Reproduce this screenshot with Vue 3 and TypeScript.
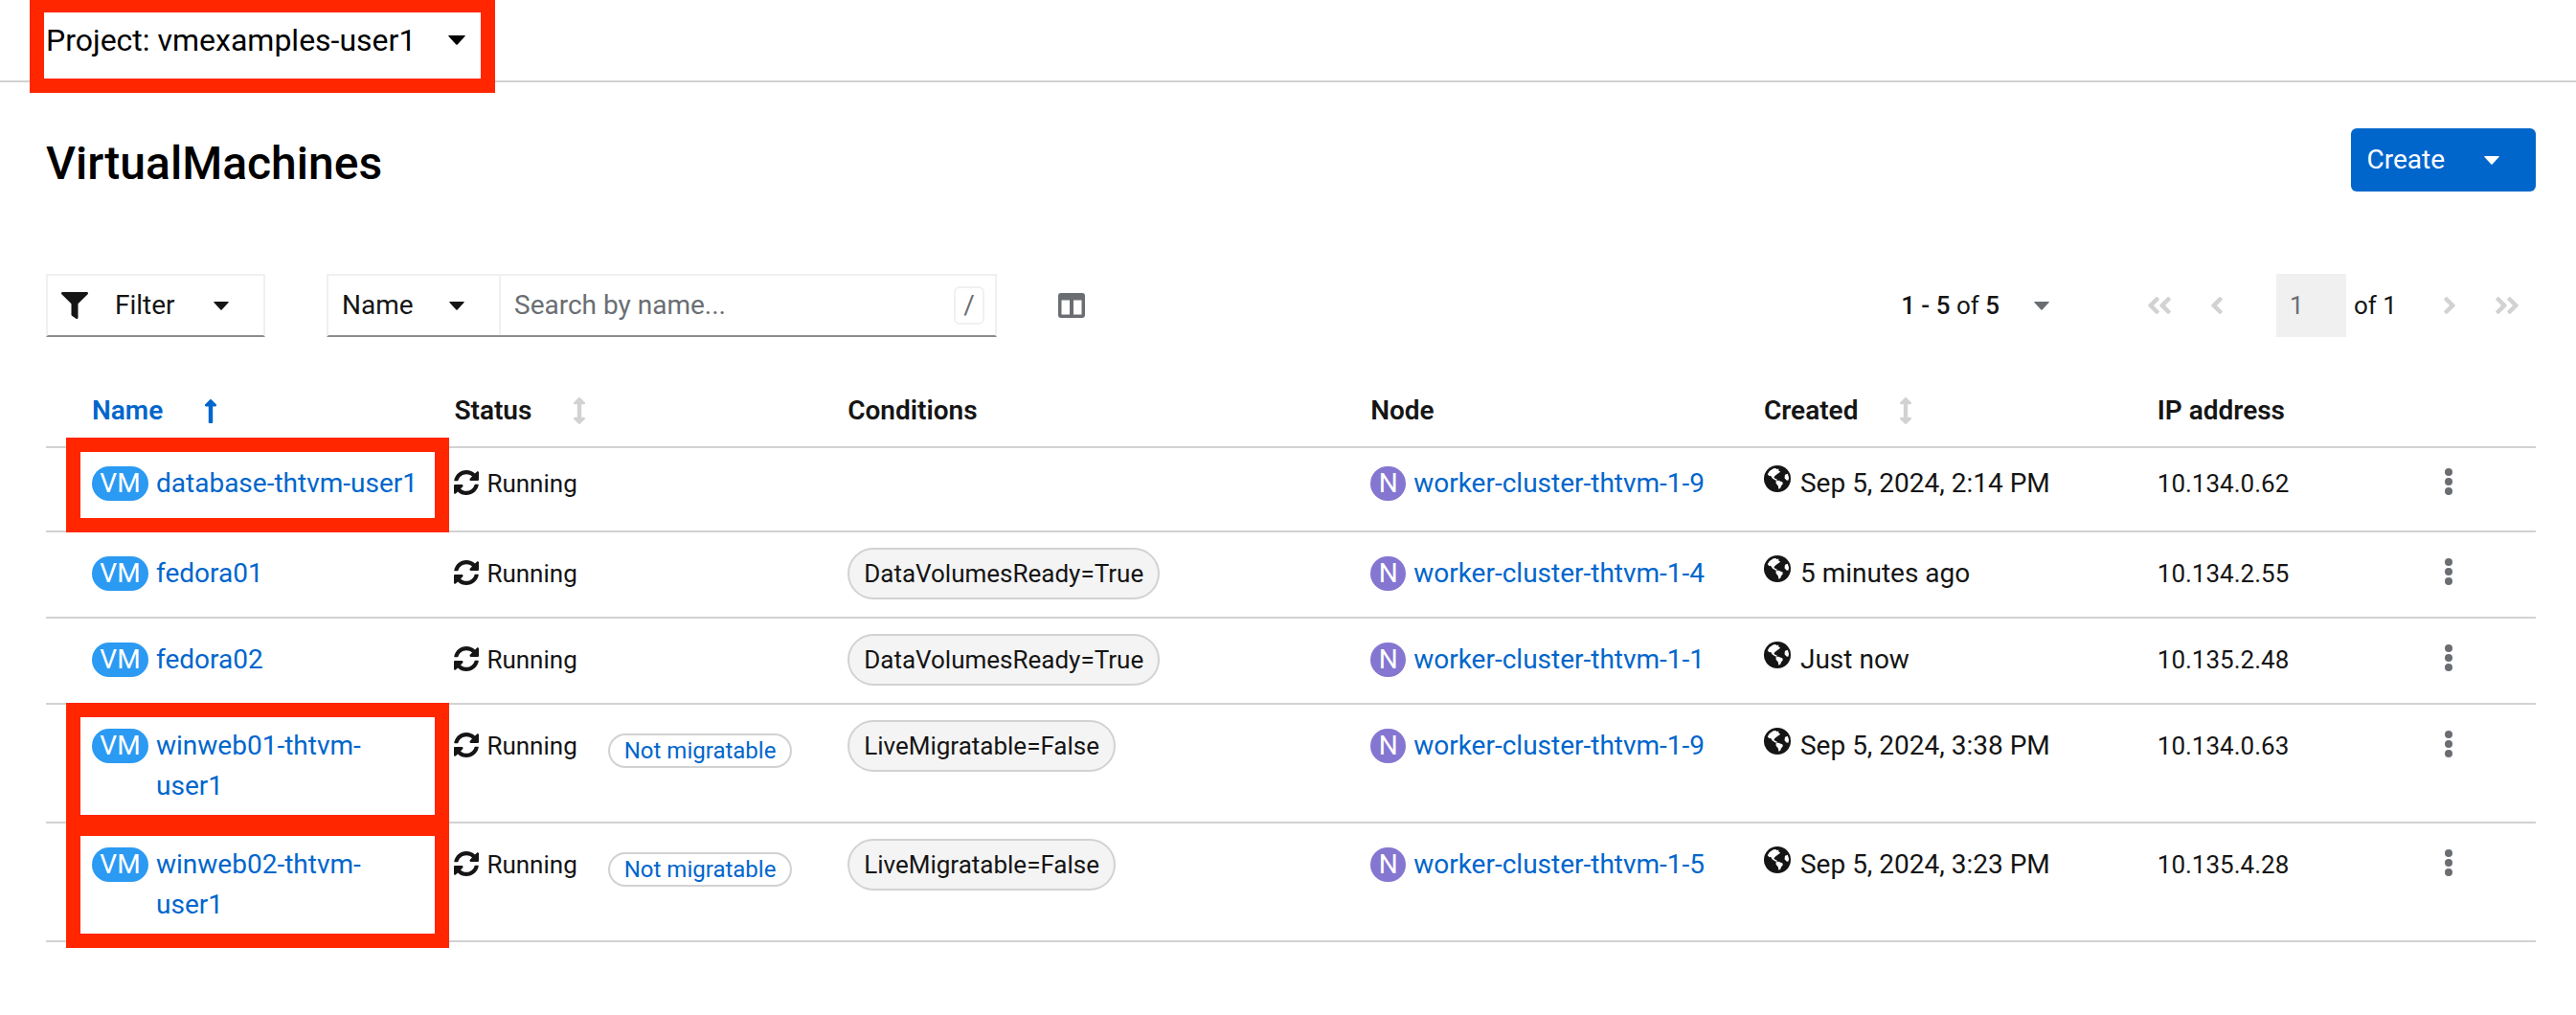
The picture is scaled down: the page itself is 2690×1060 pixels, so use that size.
<script setup lang="ts">
import { ref } from 'vue'

interface VirtualMachine {
  name: string
  status: string
  label?: string
  condition?: string
  node: string
  created: string
  ip: string
  marked?: boolean
}

const machines: VirtualMachine[] = [
  { name: 'database-thtvm-user1', status: 'Running', node: 'worker-cluster-thtvm-1-9', created: 'Sep 5, 2024, 2:14 PM', ip: '10.134.0.62', marked: true },
  { name: 'fedora01', status: 'Running', condition: 'DataVolumesReady=True', node: 'worker-cluster-thtvm-1-4', created: '5 minutes ago', ip: '10.134.2.55' },
  { name: 'fedora02', status: 'Running', condition: 'DataVolumesReady=True', node: 'worker-cluster-thtvm-1-1', created: 'Just now', ip: '10.135.2.48' },
  { name: 'winweb01-thtvm-user1', status: 'Running', label: 'Not migratable', condition: 'LiveMigratable=False', node: 'worker-cluster-thtvm-1-9', created: 'Sep 5, 2024, 3:38 PM', ip: '10.134.0.63', marked: true },
  { name: 'winweb02-thtvm-user1', status: 'Running', label: 'Not migratable', condition: 'LiveMigratable=False', node: 'worker-cluster-thtvm-1-5', created: 'Sep 5, 2024, 3:23 PM', ip: '10.135.4.28', marked: true },
]

const project = ref('vmexamples-user1')
const filterBy = ref('name')
const search = ref('')
const page = ref('1')
</script>

<template>
  <div class="app">
    <svg class="sprite" aria-hidden="true">
      <symbol id="caret" viewBox="0 0 18 10"><path d="M1 0h16q1.400 0 .5 1L9.700 9.500q-.7.700-1.400 0L.5 1Q-.4 0 1 0z" /></symbol>
      <symbol id="angle" viewBox="24 96 208 320"><path d="M31.700 239l136-136c9.400-9.400 24.600-9.400 33.900 0l22.600 22.600c9.400 9.400 9.400 24.600 0 33.900L127.900 256l96.400 96.400c9.400 9.400 9.400 24.600 0 33.900L201.700 409c-9.400 9.400-24.600 9.400-33.900 0l-136-136c-9.500-9.400-9.500-24.600-.1-34z" /></symbol>
      <symbol id="sort" viewBox="20 0 216 512"><path d="M214.059 377.941H168V134.059h46.059c21.382 0 32.090-25.851 16.971-40.971L144.971 7.029c-9.373-9.373-24.568-9.373-33.941 0L24.971 93.088c-15.119 15.119-4.411 40.971 16.971 40.971H88v243.882H41.941c-21.382 0-32.090 25.851-16.971 40.971l86.059 86.059c9.373 9.373 24.568 9.373 33.941 0l86.059-86.059c15.120-15.119 4.412-40.971-16.970-40.971z" /></symbol>
      <symbol id="sync" viewBox="8 8 496 496"><path d="M370.720 133.280C339.458 104.008 298.888 87.962 255.848 88c-77.458.068-144.328 53.178-162.791 126.850-1.344 5.363-6.122 9.150-11.651 9.150H24.103c-7.498 0-13.194-6.807-11.807-14.176C33.933 94.924 134.813 8 256 8c66.448 0 126.791 26.136 171.315 68.685L463.030 40.970C478.149 25.851 504 36.559 504 57.941V192c0 13.255-10.745 24-24 24H345.941c-21.382 0-32.090-25.851-16.971-40.971l41.750-41.749zM32 296h134.059c21.382 0 32.090 25.851 16.971 40.971l-41.750 41.750c31.262 29.273 71.835 45.319 114.876 45.280 77.418-.070 144.315-53.144 162.787-126.849 1.344-5.363 6.122-9.150 11.651-9.150h57.304c7.498 0 13.194 6.807 11.807 14.176C478.067 417.076 377.187 504 256 504c-66.448 0-126.791-26.136-171.315-68.685L48.970 471.030C33.851 486.149 8 475.441 8 454.059V320c0-13.255 10.745-24 24-24z" /></symbol>
      <symbol id="globe" viewBox="0 0 28 28">
        <circle cx="14" cy="14" r="14" />
        <path fill="#fff" d="M3.800 9.200Q5.500 5.200 9.800 3.200l2.400-.2 1.200 1 1.800-.6.2 2 1.800 1.400-3.200 2.200-2.600 2-1 1.600 1.200 1.200 1.600.4 1 1.600-2.400-.4-3-2-1.800-2.600-1.400.4z" />
        <path fill="#fff" d="M12.500 16.200l2.700-.4 4.200 1.600.4 1.800-1.800 2.200-.8 2.400-1.800 1-.6-3.200-2.200-2.800z" />
        <path fill="#fff" d="M22 9.800l2.800-1 1.300 4.200-.7 2.800-1.900-.4-2-2.200z" />
      </symbol>
      <symbol id="kebab" viewBox="0 0 8 28"><circle cx="4" cy="4" r="4" /><circle cx="4" cy="14" r="4" /><circle cx="4" cy="24" r="4" /></symbol>
    </svg>

    <div class="project-bar">
      <div class="project">
        <select v-model="project" class="plain-select" aria-label="Project">
          <option value="vmexamples-user1">Project: vmexamples-user1</option>
        </select>
        <svg class="caret caret--large"><use href="#caret" /></svg>
        <span class="highlight highlight--project"></span>
      </div>
    </div>

    <main class="content">
      <header class="page-head">
        <h1>VirtualMachines</h1>
        <button type="button" class="create">Create<svg class="caret"><use href="#caret" /></svg></button>
      </header>

      <div class="toolbar">
        <button type="button" class="filter">
          <svg class="funnel" viewBox="0 0 512 512"><path d="M487.976 0H24.028C2.710 0-8.047 25.866 7.058 40.971L192 225.941V432c0 7.831 3.821 15.170 10.237 19.662l80 55.980C298.020 518.690 320 507.493 320 487.980V225.941l184.947-184.970C520.021 25.896 509.338 0 487.976 0z" /></svg>
          <span>Filter</span>
          <svg class="caret"><use href="#caret" /></svg>
        </button>

        <div class="search-group">
          <div class="search-by">
            <select v-model="filterBy" class="plain-select" aria-label="Search by">
              <option value="name">Name</option>
            </select>
            <svg class="caret"><use href="#caret" /></svg>
          </div>
          <input v-model="search" class="search" type="text" placeholder="Search by name..." aria-label="Search by name" />
          <kbd>/</kbd>
        </div>

        <button type="button" class="columns" aria-label="Manage columns">
          <svg viewBox="0 0 28 26"><path fill-rule="evenodd" d="M3 0h22a3 3 0 0 1 3 3v20a3 3 0 0 1-3 3H3a3 3 0 0 1-3-3V3a3 3 0 0 1 3-3zM3.500 7.500v15H12v-15zM16 7.500v15h8.500v-15z" /></svg>
        </button>

        <nav class="pagination" aria-label="Pagination">
          <button type="button" class="range">
            <span><b>1 - 5</b> of <b>5</b></span>
            <svg class="caret"><use href="#caret" /></svg>
          </button>
          <button type="button" class="step" disabled aria-label="First page"><svg><use href="#angle" /></svg><svg><use href="#angle" /></svg></button>
          <button type="button" class="step" disabled aria-label="Previous page"><svg><use href="#angle" /></svg></button>
          <div class="page-of">
            <input v-model="page" type="text" disabled aria-label="Current page" />
            <span>of 1</span>
          </div>
          <button type="button" class="step step--next" disabled aria-label="Next page"><svg><use href="#angle" /></svg></button>
          <button type="button" class="step step--next" disabled aria-label="Last page"><svg><use href="#angle" /></svg><svg><use href="#angle" /></svg></button>
        </nav>
      </div>

      <table>
        <colgroup>
          <col class="c-name" /><col class="c-mid" /><col class="c-cond" /><col class="c-mid" /><col class="c-mid" /><col class="c-ip" /><col />
        </colgroup>
        <thead>
          <tr>
            <th scope="col"><button type="button" class="sort sort--active">Name<svg class="up" viewBox="20 32 216 448"><path d="M88 166.059V468c0 6.627 5.373 12 12 12h56c6.627 0 12-5.373 12-12V166.059h46.059c21.382 0 32.090-25.851 16.971-40.971l-86.059-86.059c-9.373-9.373-24.569-9.373-33.941 0l-86.059 86.059c-15.119 15.119-4.411 40.971 16.971 40.971H88z" /></svg></button></th>
            <th scope="col"><button type="button" class="sort">Status<svg><use href="#sort" /></svg></button></th>
            <th scope="col">Conditions</th>
            <th scope="col">Node</th>
            <th scope="col"><button type="button" class="sort">Created<svg><use href="#sort" /></svg></button></th>
            <th scope="col">IP address</th>
            <th></th>
          </tr>
        </thead>
        <tbody>
          <tr v-for="vm in machines" :key="vm.name" :class="{ 'row--chip': vm.condition, 'row--tall': vm.label }">
            <td>
              <div class="resource">
                <span class="badge badge--vm">VM</span>
                <a href="#">{{ vm.name }}</a>
              </div>
              <span v-if="vm.marked" class="highlight"></span>
            </td>
            <td>
              <div class="status">
                <span class="state"><svg class="sync"><use href="#sync" /></svg>{{ vm.status }}</span>
                <a v-if="vm.label" href="#" class="label">{{ vm.label }}</a>
              </div>
            </td>
            <td><div v-if="vm.condition" class="chip">{{ vm.condition }}</div></td>
            <td>
              <div class="resource">
                <span class="badge badge--node">N</span>
                <a href="#">{{ vm.node }}</a>
              </div>
            </td>
            <td><svg class="globe"><use href="#globe" /></svg>{{ vm.created }}</td>
            <td class="ip">{{ vm.ip }}</td>
            <td class="actions"><button type="button" :aria-label="`Actions for ${vm.name}`"><svg><use href="#kebab" /></svg></button></td>
          </tr>
        </tbody>
      </table>
    </main>
  </div>
</template>

<style>
body {
  margin: 0;
  background: #fff;
}
</style>

<style scoped>
.app {
  min-height: 100vh;
  overflow-x: hidden;
  color: #151515;
  font-family: Roboto, "Liberation Sans", sans-serif;
  font-size: 28px;
  line-height: 42px;
}
.app *,
.app *::before {
  box-sizing: border-box;
}
.sprite {
  position: absolute;
  width: 0;
  height: 0;
}
svg {
  fill: currentColor;
  flex: none;
}
a {
  color: #06c;
  text-decoration: none;
}
button,
input,
select {
  margin: 0;
  padding: 0;
  border: 0;
  border-radius: 0;
  background: none;
  color: inherit;
  font: inherit;
}
button:not(:disabled),
select {
  cursor: pointer;
}
.plain-select {
  appearance: none;
  flex: 1;
  min-width: 0;
}
.caret {
  width: 16px;
  height: 9px;
}
.caret--large {
  width: 18px;
  height: 10px;
  margin-left: -18px;
  pointer-events: none;
}
.highlight {
  position: absolute;
  top: -11px;
  right: 5px;
  bottom: -2px;
  left: 21px;
  border: 15px solid #ff2600;
  pointer-events: none;
}

.project-bar {
  padding: 18px 48px;
  border-bottom: 2px solid #d2d2d2;
  color: #000;
  font-size: 32px;
  line-height: 48px;
}
.project {
  position: relative;
  display: flex;
  align-items: center;
  width: 438px;
}
.highlight--project {
  top: -20px;
  right: -31px;
  bottom: -31px;
  left: -17px;
}

.content {
  padding: 48px 42px 48px 48px;
}
.page-head {
  display: flex;
  justify-content: space-between;
  align-items: flex-start;
  margin-bottom: 78px;
}
h1 {
  margin: 0;
  color: #000;
  font-size: 48px;
  font-weight: 500;
  line-height: 74px;
}
.create {
  display: flex;
  align-items: center;
  gap: 41px;
  height: 66px;
  padding: 0 38px 0 16px;
  border-radius: 6px;
  background: #06c;
  color: #fff;
}

.toolbar {
  display: flex;
  align-items: center;
  margin-bottom: 32px;
}
.filter,
.search-group {
  display: flex;
  align-items: center;
  height: 66px;
  border: 2px solid #f0f0f0;
  border-bottom-color: #8a8d90;
}
.filter {
  width: 229px;
  padding-left: 14px;
}
.funnel {
  width: 28px;
  height: 28px;
  margin-right: 28px;
}
.filter .caret {
  margin-left: 40px;
}
.search-group {
  width: 700px;
  margin-left: 64px;
}
.search-by {
  display: flex;
  align-items: center;
  align-self: stretch;
  width: 180px;
  padding-left: 14px;
  border-right: 2px solid #f0f0f0;
}
.search-by .caret {
  margin: 0 36px 0 -16px;
  pointer-events: none;
}
.search {
  flex: 1;
  min-width: 0;
  padding-left: 14px;
  outline: 0;
}
.search::placeholder {
  color: #6a6e73;
  opacity: 1;
}
kbd {
  width: 32px;
  margin-right: 11px;
  border: 2px solid #f0f0f0;
  border-radius: 6px;
  color: #6a6e73;
  font-family: inherit;
  line-height: 36px;
  text-align: center;
}
.columns {
  display: flex;
  margin-left: 64px;
  color: #6a6e73;
}
.columns svg {
  width: 28px;
  height: 26px;
}

.pagination {
  display: flex;
  align-items: center;
  margin-left: auto;
  font-size: 26px;
}
.range {
  display: flex;
  align-items: center;
  gap: 36px;
  margin-right: 85px;
}
.range .caret {
  color: #6a6e73;
}
b {
  font-weight: 500;
}
.step {
  display: flex;
  justify-content: center;
  width: 60px;
  color: #d2d2d2;
}
.step svg {
  width: 12px;
  height: 18px;
}
.step--next svg {
  transform: rotate(180deg);
}
.page-of {
  display: flex;
  align-items: center;
  gap: 8px;
  width: 183px;
  padding-left: 32px;
}
.page-of input {
  width: 73px;
  height: 66px;
  padding-left: 14px;
  background: #f0f0f0;
  color: #6a6e73;
}

table {
  width: 100%;
  border-collapse: separate;
  border-spacing: 0;
  table-layout: fixed;
}
.c-name {
  width: 16.4%;
}
.c-mid {
  width: 15.8%;
}
.c-cond {
  width: 21%;
}
.c-ip {
  width: 10%;
}
th,
td {
  position: relative;
  padding: 16px 0;
  border-bottom: 2px solid #d2d2d2;
  text-align: left;
  vertical-align: baseline;
}
th {
  padding-top: 24px;
  font-weight: 600;
}
th:first-child,
td:first-child {
  padding-left: 48px;
}
td:first-child {
  padding-right: 32px;
}
.sort {
  display: flex;
  align-items: center;
  gap: 44px;
}
.sort svg {
  width: 12px;
  height: 28px;
  color: #d2d2d2;
}
.sort--active {
  color: #06c;
}
.sort .up {
  height: 25px;
  color: #06c;
}
tbody tr {
  height: 88px;
}
tbody .row--chip {
  height: 90px;
}
tbody .row--tall {
  height: 124px;
}
.row--tall .highlight {
  top: -2px;
  bottom: -8px;
}
.resource {
  display: flex;
  align-items: baseline;
  gap: 8px;
}
.badge {
  flex: none;
  border-radius: 18px;
  color: #fff;
  line-height: 36px;
  text-align: center;
}
.badge--vm {
  width: 59px;
  background: #2b9af3;
}
.badge--node {
  width: 37px;
  background: #8476d1;
}
.status {
  display: flex;
  align-items: flex-start;
  gap: 32px;
  font-size: 26px;
}
.sync {
  width: 26px;
  height: 26px;
  margin-right: 8px;
  vertical-align: -3px;
}
.label {
  margin-top: 8px;
  padding: 0 15px;
  border: 2px solid #d2d2d2;
  border-radius: 18px;
  font-size: 24px;
  line-height: 32px;
}
.chip {
  width: fit-content;
  padding: 0 15px;
  border: 2px solid #d2d2d2;
  border-radius: 27px;
  background: #f4f4f4;
  font-size: 26px;
  line-height: 50px;
}
.globe {
  width: 28px;
  height: 28px;
  margin-right: 10px;
  vertical-align: 0;
}
.ip {
  font-size: 26px;
}
.actions {
  padding-right: 87px;
  text-align: right;
}
.actions svg {
  width: 8px;
  height: 28px;
  color: #6a6e73;
  vertical-align: -3px;
}
</style>
